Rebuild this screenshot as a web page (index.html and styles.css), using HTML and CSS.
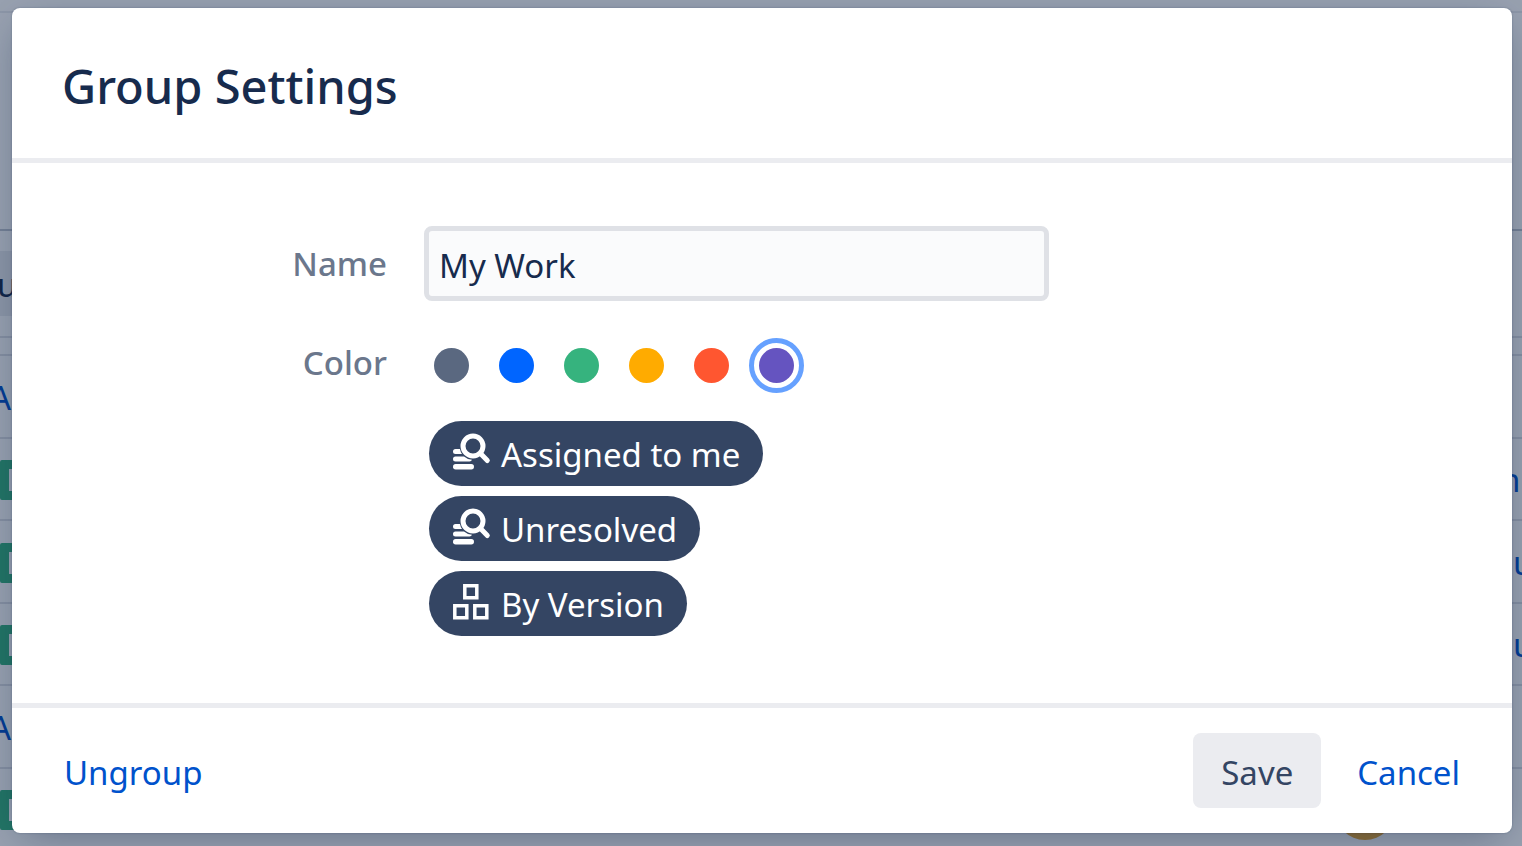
FILE: index.html
```html
<!DOCTYPE html>
<html lang="en">
<head>
  <meta charset="UTF-8" />
  <meta name="viewport" content="width=device-width, initial-scale=1.0" />
  <title>Group Settings</title>
  <link rel="stylesheet" href="styles.css">
</head>
<body>
<!-- board behind the dialog -->
<div class="board" aria-hidden="true">
  <div class="board-top"></div>
  <div class="board-header"></div>
  <div class="board-toolbar"><span>u</span></div>
  <div class="board-gap"></div>
  <div class="row"><span class="key">A</span></div>
  <div class="row"><span class="story"></span><span class="cell-n">n</span></div>
  <div class="row"><span class="story"></span><span class="cell-u">u</span></div>
  <div class="row"><span class="story"></span><span class="cell-u">u</span></div>
  <div class="row"><span class="key">A</span></div>
  <div class="row"><span class="story"></span><span class="avatar"></span></div>
</div>
<div class="blanket"></div>

<form class="dialog" role="dialog" aria-labelledby="dialog-title">
  <header class="dialog-header">
    <h2 id="dialog-title">Group Settings</h2>
  </header>
  <div class="dialog-body">
    <label class="label" for="name">Name</label>
    <input class="text" type="text" id="name" value="My Work">
    <span class="label" id="color-label">Color</span>
    <div class="colors" role="radiogroup" aria-labelledby="color-label">
      <input type="radio" name="color" class="color gray" aria-label="Gray">
      <input type="radio" name="color" class="color blue" aria-label="Blue">
      <input type="radio" name="color" class="color green" aria-label="Green">
      <input type="radio" name="color" class="color yellow" aria-label="Yellow">
      <input type="radio" name="color" class="color red" aria-label="Red">
      <input type="radio" name="color" class="color purple" aria-label="Purple" checked>
    </div>
    <ul class="chips">
      <li class="chip">
        <svg class="icon" viewBox="0 0 36 36">
          <path class="fill" d="M2.500 15H7q.4 2.700 2 5H2.500a2.500 2.500 0 0 1 0-5zM2.500 22.500H11q3 2.800 8 3.200-.6 1.800-2.500 1.800h-14a2.500 2.500 0 0 1 0-5z"/>
          <rect class="fill" x="0" y="30" width="21" height="5.500" rx="2.700"/>
          <circle class="line" cx="20" cy="12" r="10"/>
          <path class="line" d="M27.500 19.500l6.800 7"/>
        </svg>
        <span>Assigned to me</span>
      </li>
      <li class="chip">
        <svg class="icon" viewBox="0 0 36 36">
          <path class="fill" d="M2.500 15H7q.4 2.700 2 5H2.500a2.500 2.500 0 0 1 0-5zM2.500 22.500H11q3 2.800 8 3.200-.6 1.800-2.500 1.800h-14a2.500 2.500 0 0 1 0-5z"/>
          <rect class="fill" x="0" y="30" width="21" height="5.500" rx="2.700"/>
          <circle class="line" cx="20" cy="12" r="10"/>
          <path class="line" d="M27.500 19.500l6.800 7"/>
        </svg>
        <span>Unresolved</span>
      </li>
      <li class="chip">
        <svg class="icon" viewBox="0 0 36 36">
          <path class="box" d="M11.800 1.800h12v12h-12zM1.800 21.800h12v12h-12zM21.800 21.800h12v12h-12z"/>
        </svg>
        <span>By Version</span>
      </li>
    </ul>
  </div>
  <footer class="dialog-footer">
    <button type="button" class="link">Ungroup</button>
    <div class="actions">
      <button type="submit" class="save">Save</button>
      <button type="button" class="link">Cancel</button>
    </div>
  </footer>
</form>
</body>
</html>
```

FILE: styles.css
```css
* {
    box-sizing: border-box;
}
body {
    margin: 0;
    height: 100vh;
    overflow: hidden;
    position: relative;
    font-family: "Segoe UI", "Noto Sans", sans-serif;
    font-size: 33px;
    line-height: 48px;
    color: #172b4d;
    background: #fff;
}

/* board */
.board-top {
    height: 13px;
    border-bottom: 2px solid #ebecf0;
}
.board-header {
    height: 218px;
    border-bottom: 2px solid #c1c7d0;
}
.board-toolbar {
    height: 107px;
    padding: 20px 0;
    border-bottom: 2px solid #dfe1e6;
}
.board-toolbar span {
    display: block;
    width: 40px;
    height: 65px;
    margin-left: -3px;
    line-height: 68px;
    background: #ebecf0;
}
.board-gap {
    height: 18px;
    border-bottom: 2px solid #dfe1e6;
}
.row {
    display: flex;
    justify-content: space-between;
    align-items: center;
    height: 82px;
    padding-top: 2px;
    border-bottom: 2px solid #dfe1e6;
    color: #0052cc;
}
.row:nth-child(odd) {
    height: 83px;
}
.key {
    margin-left: -10px;
}
.story {
    width: 40px;
    height: 40px;
    border: 9px solid #36b37e;
    border-radius: 2px;
    background: #fff;
}
.cell-n {
    width: 22px;
}
.cell-u {
    width: 9px;
}
.avatar {
    flex: none;
    width: 60px;
    height: 60px;
    margin-right: 127px;
    border-radius: 50%;
    background: #eda82f;
}
.blanket {
    position: absolute;
    inset: 0;
    background: rgba(9, 30, 66, 0.42);
}

/* dialog */
.dialog {
    position: absolute;
    top: 8px;
    left: 12px;
    right: 10px;
    background: #fff;
    border-radius: 8px;
    box-shadow: 0 0 2px rgba(9, 30, 66, 0.3), 0 10px 40px -10px rgba(9, 30, 66, 0.4);
}
.dialog-header {
    padding: 48px 50px 42px;
    border-bottom: 5px solid #ebecf0;
}
.dialog-header h2 {
    margin: 0;
    font-size: 47px;
    line-height: 60px;
    font-weight: 500;
}
.dialog-body {
    display: grid;
    grid-template-columns: 25% minmax(0, 625px);
    column-gap: 37px;
    row-gap: 24px;
    padding: 63px 0 67px;
}
.label {
    padding-top: 14px;
    font-weight: 500;
    text-align: right;
    color: #6b778c;
}
.text {
    width: 100%;
    height: 75px;
    padding: 4px 10px 0;
    font: inherit;
    color: #172b4d;
    background: #fafbfc;
    border: 5px solid #dfe1e6;
    border-radius: 8px;
}
.colors {
    display: flex;
    gap: 10px;
    padding-top: 13px;
}
.color {
    appearance: none;
    flex: none;
    width: 55px;
    height: 55px;
    margin: 0;
    padding: 5px;
    border: 5px solid transparent;
    border-radius: 50%;
    background-clip: content-box;
}
.color:checked {
    border-color: #66a1ff;
}
.gray {
    background-color: #5a6880;
}
.blue {
    background-color: #0065ff;
}
.green {
    background-color: #36b37e;
}
.yellow {
    background-color: #ffab00;
}
.red {
    background-color: #ff5630;
}
.purple {
    background-color: #6554c0;
}
.chips {
    grid-column: 2;
    display: flex;
    flex-direction: column;
    align-items: flex-start;
    gap: 10px;
    margin: 4px 0 0;
    padding: 0 5px;
    list-style: none;
}
.chip {
    display: flex;
    align-items: center;
    gap: 12px;
    height: 65px;
    padding: 2px 23px 0 24px;
    color: #fff;
    background: #344563;
    border-radius: 33px;
}
.icon {
    width: 36px;
    height: 36px;
    margin-bottom: 6px;
    overflow: visible;
}
.fill {
    fill: #fff;
}
.line,
.box {
    fill: none;
    stroke: #fff;
    stroke-width: 5;
    stroke-linecap: round;
}
.box {
    stroke-width: 3.5;
}
.dialog-footer {
    display: flex;
    justify-content: space-between;
    align-items: center;
    padding: 25px 52px;
    border-top: 5px solid #ebecf0;
}
.actions {
    display: flex;
    gap: 36px;
}
button {
    height: 75px;
    padding: 4px 0 0;
    font: inherit;
    border: 0;
    border-radius: 8px;
    cursor: pointer;
}
.save {
    padding: 4px 28px 0;
    color: #344563;
    background: #ebecf0;
}
.link {
    color: #0052cc;
    background: none;
}
```
